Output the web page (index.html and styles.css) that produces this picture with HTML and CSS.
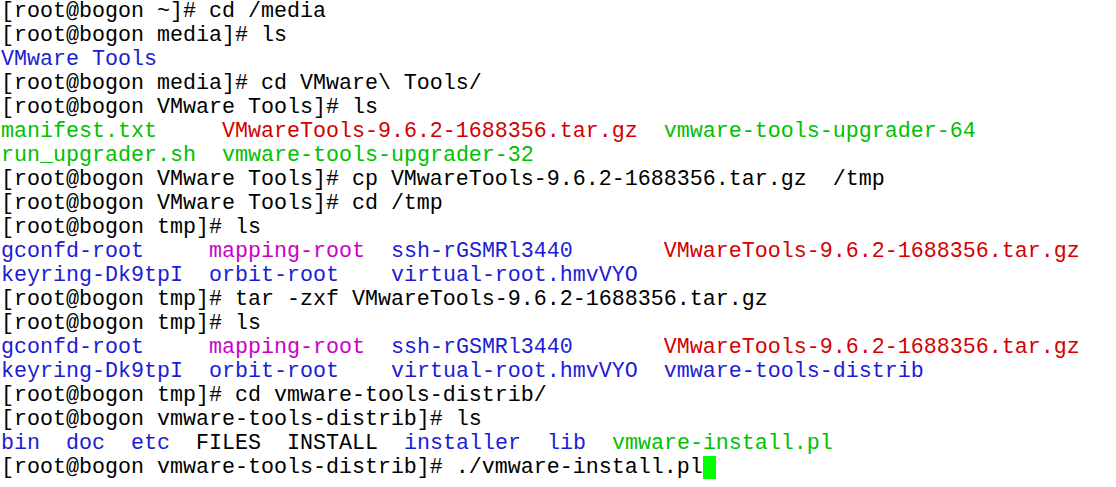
FILE: index.html
```html
<!DOCTYPE html>
<html lang="en">
<head>
  <meta charset="UTF-8" />
  <title>root@bogon:~</title>
  <link rel="stylesheet" href="styles.css">
</head>
<body>
<pre class="terminal">[root@bogon ~]# cd /media
[root@bogon media]# ls
<span class="dir">VMware Tools</span>
[root@bogon media]# cd VMware\ Tools/
[root@bogon VMware Tools]# ls
<span class="exe">manifest.txt</span>     <span class="arc">VMwareTools-9.6.2-1688356.tar.gz</span>  <span class="exe">vmware-tools-upgrader-64</span>
<span class="exe">run_upgrader.sh</span>  <span class="exe">vmware-tools-upgrader-32</span>
[root@bogon VMware Tools]# cp VMwareTools-9.6.2-1688356.tar.gz  /tmp
[root@bogon VMware Tools]# cd /tmp
[root@bogon tmp]# ls
<span class="dir">gconfd-root</span>     <span class="sock">mapping-root</span>  <span class="dir">ssh-rGSMRl3440</span>       <span class="arc">VMwareTools-9.6.2-1688356.tar.gz</span>
<span class="dir">keyring-Dk9tpI</span>  <span class="dir">orbit-root</span>    <span class="dir">virtual-root.hmvVYO</span>
[root@bogon tmp]# tar -zxf VMwareTools-9.6.2-1688356.tar.gz
[root@bogon tmp]# ls
<span class="dir">gconfd-root</span>     <span class="sock">mapping-root</span>  <span class="dir">ssh-rGSMRl3440</span>       <span class="arc">VMwareTools-9.6.2-1688356.tar.gz</span>
<span class="dir">keyring-Dk9tpI</span>  <span class="dir">orbit-root</span>    <span class="dir">virtual-root.hmvVYO</span>  <span class="dir">vmware-tools-distrib</span>
[root@bogon tmp]# cd vmware-tools-distrib/
[root@bogon vmware-tools-distrib]# ls
<span class="dir">bin</span>  <span class="dir">doc</span>  <span class="dir">etc</span>  FILES  INSTALL  <span class="dir">installer</span>  <span class="dir">lib</span>  <span class="exe">vmware-install.pl</span>
[root@bogon vmware-tools-distrib]# ./vmware-install.pl<span class="cursor"> </span></pre>
</body>
</html>
```

FILE: styles.css
```css
* {
  margin: 0;
  padding: 0;
  box-sizing: border-box;
}

body {
  background: #fff;
}

.terminal {
  padding: 0 0 0 1px;
  font-family: "Liberation Mono", "Courier New", monospace;
  font-size: 21.667px;
  line-height: 24px;
  color: #000;
  white-space: pre;
}

.dir {
  color: #1c1cd4;
}

.exe {
  color: #00c000;
}

.arc {
  color: #d40000;
}

.sock {
  color: #c800c8;
}

.cursor {
  display: inline-block;
  width: 13px;
  height: 23px;
  vertical-align: top;
  background: #00ff00;
}
```
